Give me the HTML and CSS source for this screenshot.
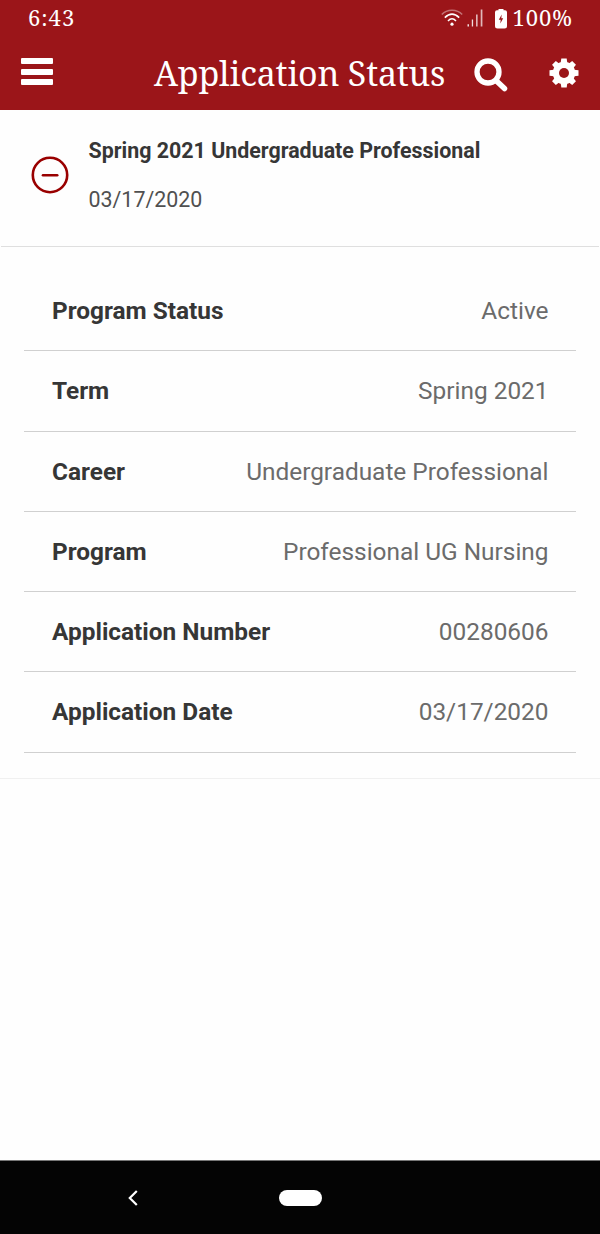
FILE: index.html
```
<!DOCTYPE html>
<html lang="en">
<head>
  <meta charset="UTF-8">
  <meta name="viewport" content="width=device-width, initial-scale=1" />
  <title>Application Status</title>
  <link rel="stylesheet" href="styles.css">
</head>
<body>
  <header class="header">
    <div class="status-bar">
      <span class="clock">6:43</span>
      <div class="indicators">
        <svg class="wifi" viewBox="0 0 22 18" fill="none" stroke="#fff" stroke-width="1.5">
          <path d="M.8 5.6C6-.2 16-.2 21.2 5.6" opacity=".4" />
          <path d="M3.8 8.6Q11 1.6 18.2 8.6M7 12Q11 7.6 15 12" />
          <circle cx="11" cy="15.2" r="1.6" fill="#fff" stroke="none" />
        </svg>
        <svg class="signal" viewBox="0 0 16 18" fill="#fff">
          <path d="M.5 15.2h1.5V17.5H.5zM4.800 10.500h1.300v7H4.800zM9.200 5.500h1.300v12H9.200z" opacity=".85" />
          <path d="M13.700.500h1.700v17h-1.700z" opacity=".7" />
        </svg>
        <svg class="battery" viewBox="0 0 12 20">
          <path d="M3.5 0h5v1.200h1.500q2 0 2 2V17q0 2.500-2.500 2.500h-7Q0 19.500 0 17V3.200q0-2 2-2h1.500z" fill="#fff" />
          <path d="M6.7 5.500 3.800 10.800H5.700L5.300 14.500 8.200 9.200H6.300z" fill="#9b1519" />
        </svg>
        <span class="level">100%</span>
      </div>
    </div>
    <div class="toolbar">
      <div class="menu">
        <span></span>
        <span></span>
        <span></span>
      </div>
      <h1 class="title">Application Status</h1>
      <svg class="search" viewBox="0 0 34 34" fill="none" stroke="#fff">
        <circle cx="14" cy="14" r="11" stroke-width="5.3" />
        <path d="M22 22.500 30.500 30.500" stroke-width="5.5" stroke-linecap="round" />
      </svg>
      <svg class="settings" viewBox="-15 -15 30 30">
        <g fill="#fff">
          <circle r="11.2" />
          <g id="teeth">
            <path d="M-3.300-10-2.700-14.500H2.700L3.300-10V10L2.700 14.500H-2.700L-3.300 10z" />
            <path d="M-10-3.300-14.500-2.700V2.700L-10 3.300H10L14.500 2.700V-2.700L10-3.300z" />
          </g>
          <use href="#teeth" transform="rotate(45) scale(.98)" />
        </g>
        <circle r="5" fill="#9b1519" />
      </svg>
    </div>
  </header>

  <main class="content">
    <section class="summary">
      <svg class="collapse" viewBox="0 0 38 38" fill="none" stroke="#990000" stroke-width="2.6">
        <circle cx="19" cy="19" r="17.2" />
        <path d="M12 19.300h14.200" stroke-linecap="round" />
      </svg>
      <div class="summary-text">
        <h2>Spring 2021 Undergraduate Professional</h2>
        <p>03/17/2020</p>
      </div>
    </section>

    <dl class="details">
      <div class="line"><dt>Program Status</dt><dd>Active</dd></div>
      <div class="line"><dt>Term</dt><dd>Spring 2021</dd></div>
      <div class="line"><dt>Career</dt><dd>Undergraduate Professional</dd></div>
      <div class="line"><dt>Program</dt><dd>Professional UG Nursing</dd></div>
      <div class="line"><dt>Application Number</dt><dd>00280606</dd></div>
      <div class="line"><dt>Application Date</dt><dd>03/17/2020</dd></div>
    </dl>
  </main>

  <nav class="nav-bar">
    <svg class="back" viewBox="0 0 10 16" fill="none" stroke="#fff" stroke-width="2.2">
      <path d="M8.800 1 1.800 8l7 7" />
    </svg>
    <div class="home"></div>
  </nav>
</body>
</html>
```
FILE: styles.css
```
* {
  box-sizing: border-box;
  margin: 0;
  padding: 0;
}

body {
  display: flex;
  flex-direction: column;
  height: 1234px;
  background-color: #fefefe;
  font-family: Roboto, sans-serif;
}

.header {
  height: 110px;
  background-color: #9b1519;
  color: #fff;
  font-family: "Noto Serif", "DejaVu Serif Condensed", "DejaVu Serif", serif;
}

.status-bar {
  display: flex;
  justify-content: space-between;
  height: 38px;
  padding: 0 27px 0 28px;
  font-size: 22px;
  letter-spacing: 1px;
  line-height: 35px;
}

.indicators {
  display: flex;
}

.wifi {
  width: 22px;
  height: 18px;
  margin-top: 9px;
}

.signal {
  width: 16px;
  height: 18px;
  margin: 9px 0 0 4px;
}

.battery {
  width: 12px;
  height: 20px;
  margin: 9px 5px 0 12px;
}

.toolbar {
  display: flex;
  height: 72px;
  padding: 0 21px;
}

.menu {
  width: 32px;
  padding-top: 20px;
}

.menu span {
  display: block;
  height: 6px;
  margin-bottom: 4.5px;
  border-radius: 1px;
  background-color: #fff;
}

.title {
  width: 292px;
  margin-left: 101px;
  font-size: 34px;
  font-weight: normal;
  letter-spacing: -.2px;
  line-height: 71px;
  white-space: nowrap;
}

.search {
  width: 34px;
  height: 34px;
  margin: 20px 0 0 28px;
}

.settings {
  width: 30px;
  height: 30px;
  margin: 20px 0 0 41px;
}

.content {
  flex: 1;
}

.summary {
  display: flex;
  height: 137px;
  margin: 0 1px;
  border-bottom: 1px solid #dfdfdf;
}

.collapse {
  width: 38px;
  height: 38px;
  margin: 46px 20px 0 29.5px;
}

.summary-text {
  padding-top: 26px;
  font-size: 21.4px;
  line-height: 30px;
}

.summary-text h2 {
  color: #363636;
  font-size: 21.4px;
}

.summary-text p {
  margin-top: 19px;
  color: #505050;
}

.details {
  padding: 24px 24px 25px;
  border-bottom: 1px solid #f0f0f0;
}

.line {
  display: flex;
  justify-content: space-between;
  height: 80.3px;
  padding: 0 27.5px 0 28px;
  border-bottom: 1px solid #d0d0d0;
  font-size: 24.4px;
  line-height: 80px;
}

.line dt {
  color: #363636;
  font-weight: bold;
}

.line dd {
  color: #6b6b6b;
}

.nav-bar {
  display: flex;
  align-items: center;
  height: 74px;
  padding-left: 127.5px;
  border-top: 1px solid #777;
  background-color: #040404;
}

.back {
  width: 10px;
  height: 16px;
}

.home {
  width: 43px;
  height: 16px;
  margin-left: 141px;
  border-radius: 8px;
  background-color: #fff;
}
```
